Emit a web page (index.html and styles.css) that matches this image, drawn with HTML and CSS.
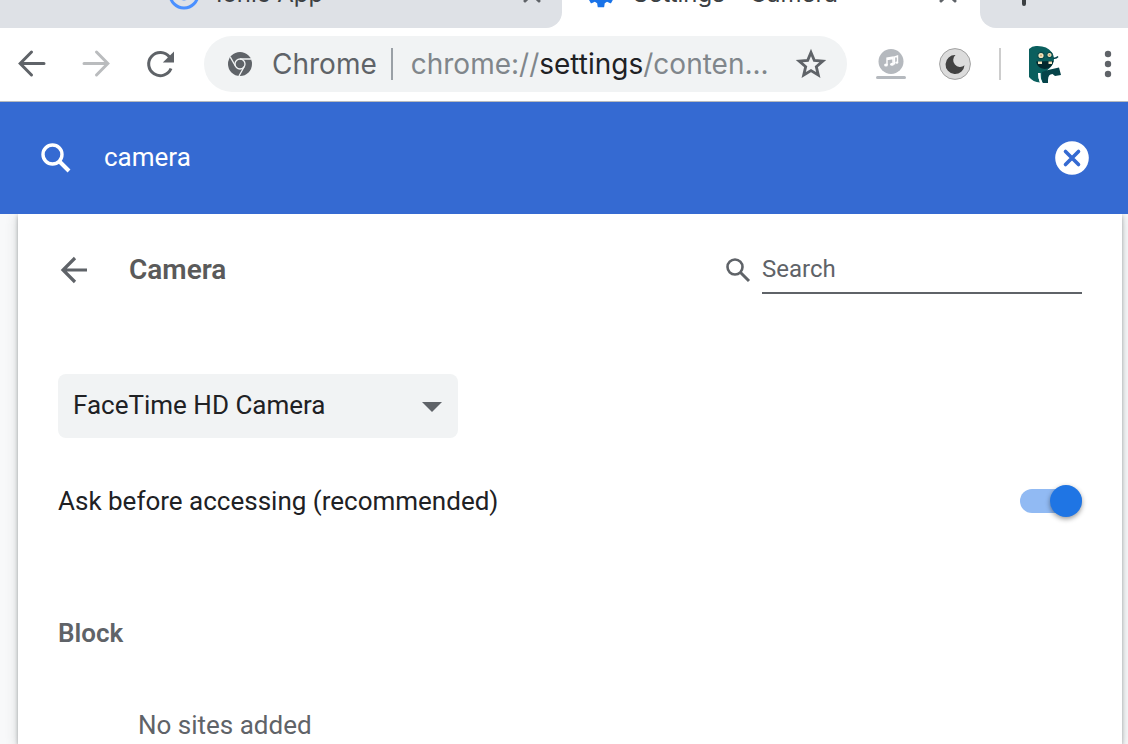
FILE: index.html
```html
<!DOCTYPE html>
<html lang="en">
<head>
<meta charset="utf-8">
<title>Settings - Camera</title>
<link rel="stylesheet" href="styles.css">
</head>
<body>
<div class="window">
  <div class="tabs">
    <div class="tab tab-first">
      <svg class="tab-icon" width="32" height="32" viewBox="0 0 32 32"><circle cx="16" cy="16" r="14" fill="none" stroke="#4a90ff" stroke-width="3"/><circle cx="16" cy="16" r="6.500" fill="#4a90ff"/></svg>
      <span class="tab-title">Ionic App</span>
      <button class="tab-close" aria-label="Close Ionic App"><svg width="20" height="20" viewBox="0 0 20 20"><path d="M3 3l14 14M17 3L3 17" stroke="#5f6368" stroke-width="3" stroke-linecap="round"/></svg></button>
    </div>
    <div class="tab tab-active">
      <svg class="tab-icon" width="32" height="32" viewBox="0 0 24 24"><path fill="#1a73e8" d="M19.4 13c0-.3.1-.6.1-1s0-.7-.1-1l2.100-1.600c.2-.2.2-.4.1-.6l-2-3.500c-.1-.2-.4-.3-.6-.2l-2.500 1c-.5-.4-1.100-.7-1.700-1l-.4-2.600c0-.2-.2-.5-.4-.5h-4c-.3 0-.5.2-.5.5l-.4 2.600c-.6.3-1.200.6-1.700 1l-2.500-1c-.2-.1-.5 0-.6.2l-2 3.500c-.1.2-.1.5.1.6L4.500 11c0 .3-.1.7-.1 1s0 .7.1 1l-2.100 1.600c-.2.200-.2.400-.1.600l2 3.500c.1.200.4.300.6.200l2.500-1c.5.4 1.100.7 1.700 1l.4 2.600c0 .3.2.5.5.5h4c.2 0 .4-.2.4-.5l.4-2.600c.6-.3 1.200-.6 1.700-1l2.500 1c.2.1.5 0 .6-.2l2-3.500c.1-.2.1-.4-.1-.6z"/></svg>
      <span class="tab-title">Settings - Camera</span>
      <button class="tab-close" aria-label="Close Settings"><svg width="20" height="20" viewBox="0 0 20 20"><path d="M3 3l14 14M17 3L3 17" stroke="#5f6368" stroke-width="3" stroke-linecap="round"/></svg></button>
    </div>
    <div class="tab tab-new">
      <button class="tab-close" aria-label="New tab"><svg width="28" height="28" viewBox="0 0 28 28"><path d="M14 2v24M2 14h24" stroke="#3c4043" stroke-width="4" stroke-linecap="round"/></svg></button>
    </div>
  </div>

  <div class="toolbar">
    <div class="nav">
      <button class="icon-button" aria-label="Back"><svg width="32" height="32" viewBox="0 0 32 32"><path d="M28 15.500H5M15.500 4L4.200 15.500L15.500 27" fill="none" stroke="#5f6368" stroke-width="3" stroke-linecap="round"/></svg></button>
      <button class="icon-button" aria-label="Forward"><svg width="32" height="32" viewBox="0 0 32 32"><path d="M4 15.500H27M16.500 4L27.800 15.500L16.500 27" fill="none" stroke="#babcbe" stroke-width="3" stroke-linecap="round"/></svg></button>
      <button class="icon-button" aria-label="Reload"><svg width="32" height="32" viewBox="0 0 32 32"><path d="M25.500 9A11.600 11.600 0 1 0 27 20.500" fill="none" stroke="#5f6368" stroke-width="3"/><path d="M30 3.500V14.500H18.800z" fill="#5f6368"/></svg></button>
    </div>
    <div class="omnibox">
      <svg class="site-icon" width="24" height="24" viewBox="0 0 24 24"><circle cx="12" cy="12" r="12" fill="#5f6368"/><g fill="none" stroke="#f1f3f4" stroke-width="1.300"><circle cx="12" cy="12" r="5"/><path d="M12 7h11M7.700 14.500L2.300 5.200M16.300 14.500L11 24"/></g></svg>
      <span class="site-name">Chrome</span>
      <span class="site-rule"></span>
      <div class="url" role="textbox" aria-label="Address" contenteditable="true" spellcheck="false">chrome://<span class="url-host">settings</span>/conten...</div>
      <button class="icon-button" aria-label="Bookmark this page"><svg width="32" height="32" viewBox="0 0 32 32"><path d="M16 4.500L19.300 12.400L27.800 13.100L21.300 18.700L23.300 27L16 22.600L8.700 27L10.700 18.700L4.200 13.100L12.700 12.400z" fill="none" stroke="#5f6368" stroke-width="2.800"/></svg></button>
    </div>
    <div class="extensions">
      <button class="icon-button" aria-label="Music"><svg width="32" height="32" viewBox="0 0 32 32"><circle cx="16" cy="13.500" r="12.500" fill="#b5b9be"/><rect x="1" y="28" width="30" height="3" rx="1.500" fill="#b5b9be"/><g fill="none" stroke="#fff" stroke-width="1.400"><path d="M12 17V10L18 9V16M12 11.500L18 10.500M19.500 16.500V9L22.500 8V14"/></g><g fill="#fff"><ellipse cx="11" cy="17" rx="1.900" ry="1.500"/><ellipse cx="17" cy="16.200" rx="1.900" ry="1.500"/><ellipse cx="21.800" cy="14.600" rx="1.500" ry="1.200"/></g></svg></button>
      <button class="icon-button" aria-label="Dark mode"><svg width="32" height="32" viewBox="0 0 32 32"><circle cx="16" cy="16" r="15.400" fill="#dcdcdc" stroke="#a0a0a0"/><path d="M16.500 7A9.500 9.500 0 1 0 25.500 17.200A6.200 6.200 0 1 1 16.500 7z" fill="#424242"/></svg></button>
    </div>
    <span class="toolbar-rule"></span>
    <button class="profile" aria-label="Profile"><svg width="36" height="40" viewBox="0 0 36 40"><path d="M1 5Q4 2 8 2Q19 1.500 23.500 8Q27 13 25.500 18Q24 23 20 25.500L18 28Q17 33 20 36V39H15Q12 35 12 29L10 29Q10 34 12 38.500Q5 38 1 33z" fill="#0a5f5e"/><path d="M20 26L31 23.500L33 31L27 32L24.500 30Q20 30 20 36V39H15Q13 34 14 28z" fill="#06444a"/><path d="M25 14Q28 15 30 12.500" fill="none" stroke="#06444a" stroke-width="1.500"/><circle cx="13" cy="11.500" r="3.200" fill="#f3e5bd" stroke="#08484a" stroke-width="1.200"/><circle cx="21.500" cy="11" r="2.700" fill="#f3e5bd" stroke="#08484a" stroke-width="1.200"/><circle cx="13" cy="11.500" r="1" fill="#c9a873"/><circle cx="21.500" cy="11" r="1" fill="#c9a873"/><path d="M8 17.500L25.500 17Q23.500 25 16.500 25Q9.500 24.500 8 17.500z" fill="#03282e"/><path d="M10 17.500h4v2.500H10zM20.500 17.500h3.500V20H20.500z" fill="#f3e5bd"/><path d="M11.500 29Q11 34 13 38.500" fill="none" stroke="#fff" stroke-width="2.200"/></svg></button>
    <button class="icon-button menu-button" aria-label="Menu"><svg width="32" height="32" viewBox="0 0 32 32"><g fill="#5f6368"><circle cx="16" cy="6" r="3.200"/><circle cx="16" cy="16" r="3.200"/><circle cx="16" cy="26" r="3.200"/></g></svg></button>
  </div>

  <header class="search-bar">
    <label class="search-label" for="settings-search"><svg width="32" height="32" viewBox="0 0 32 32"><circle cx="12.500" cy="12.500" r="9.500" fill="none" stroke="#fff" stroke-width="3.400"/><path d="M19.500 19.500L29 29" stroke="#fff" stroke-width="4"/></svg></label>
    <input class="search-input" id="settings-search" type="text" value="camera" aria-label="Search settings">
    <button class="clear-button" aria-label="Clear search"><svg width="34" height="34" viewBox="0 0 34 34"><circle cx="17" cy="17" r="16.800" fill="#fff"/><path d="M10.500 10.500l13 13M23.500 10.500l-13 13" stroke="#356ad2" stroke-width="3.600" stroke-linecap="round"/></svg></button>
  </header>

  <div class="page">
    <main class="card">
      <div class="card-head">
        <button class="icon-button" aria-label="Back to site settings"><svg width="32" height="32" viewBox="0 0 32 32"><path d="M29 16H5.500M17 4L5 16L17 28" fill="none" stroke="#5f6368" stroke-width="3.200"/></svg></button>
        <h1 class="card-title">Camera</h1>
        <label class="site-search-label" for="site-search"><svg width="26" height="26" viewBox="0 0 26 26"><circle cx="10" cy="10" r="7.500" fill="none" stroke="#5f6368" stroke-width="2.600"/><path d="M15.500 15.500L24 24" stroke="#5f6368" stroke-width="3"/></svg></label>
        <input class="site-search" id="site-search" type="text" placeholder="Search" aria-label="Search">
      </div>
      <div class="picker">
        <select class="picker-select" aria-label="Camera device"><option>FaceTime HD Camera</option></select>
        <svg class="picker-arrow" width="20" height="10" viewBox="0 0 20 10"><path d="M0 0h20L10 10z" fill="#5f6368"/></svg>
      </div>
      <div class="row">
        <label for="ask">Ask before accessing (recommended)</label>
        <input class="toggle" id="ask" type="checkbox" role="switch" checked>
      </div>
      <h2 class="section-title">Block</h2>
      <p class="empty">No sites added</p>
    </main>
  </div>
</div>
</body>
</html>
```

FILE: styles.css
```css
* {
  box-sizing: border-box;
}

body {
  margin: 0;
  background: #f8f9fa;
  color: #202124;
  font-family: Roboto, "Liberation Sans", sans-serif;
  font-size: 26px;
  line-height: 32px;
}

button {
  display: block;
  flex: none;
  padding: 0;
  border: 0;
  background: none;
}

input,
select {
  padding: 0;
  border: 0;
  border-radius: 0;
  outline: 0;
  font: inherit;
}

svg {
  display: block;
  flex: none;
}

.window {
  display: flex;
  flex-direction: column;
  height: 100vh;
  overflow: hidden;
}

.tabs {
  display: grid;
  flex: none;
  grid-template-columns: 562fr 418fr 148fr;
  height: 28px;
  overflow: hidden;
  background: #fff;
  font-family: Inter, "Liberation Sans", sans-serif;
  font-size: 24px;
  color: #3c4043;
}

.tab {
  display: flex;
  align-items: flex-end;
  height: 28px;
  min-width: 0;
  background: #dee1e6;
}

.tab-first {
  padding: 0 20px 18px 168px;
  border-bottom-right-radius: 16px;
}

.tab-active {
  padding: 0 22px 18px 23px;
  background: #fff;
}

.tab-new {
  padding: 0 0 22px 30px;
  border-bottom-left-radius: 16px;
}

.tab-title {
  flex: 1;
  margin-left: 16px;
  white-space: nowrap;
}

.tab-close {
  padding-bottom: 6px;
}

.tab-new .tab-close {
  padding-bottom: 0;
}

.toolbar {
  display: flex;
  flex: none;
  align-items: center;
  padding: 8px 4px 9px 16px;
  border-bottom: 1px solid #b8babd;
  background: #fff;
}

.nav,
.extensions {
  display: flex;
  flex: none;
  gap: 32px;
}

.omnibox {
  display: flex;
  flex: 1;
  align-items: center;
  height: 56px;
  min-width: 0;
  margin: 0 28px;
  padding: 0 20px 0 24px;
  border-radius: 28px;
  background: #f1f3f4;
  color: #5f6368;
  font-family: Inter, "Liberation Sans", sans-serif;
  font-size: 28px;
}

.site-name {
  margin-left: 20px;
}

.site-rule {
  flex: none;
  width: 2px;
  height: 32px;
  margin: 0 18px 0 14px;
  background: #9aa0a6;
}

.url {
  flex: 1;
  min-width: 0;
  overflow: hidden;
  outline: 0;
  color: #80868b;
  white-space: nowrap;
}

.url-host {
  color: #202124;
}

.toolbar-rule {
  flex: none;
  width: 2px;
  height: 32px;
  margin: 0 27px 0 28px;
  background: #cdcdcd;
}

.menu-button {
  margin-left: 28px;
}

.search-bar {
  display: flex;
  flex: none;
  align-items: center;
  height: 112px;
  padding: 0 39px 0 40px;
  background: #356ad2;
  color: #fff;
}

.search-input {
  flex: 1;
  min-width: 0;
  margin-left: 32px;
  padding-bottom: 2px;
  background: none;
  color: #fff;
}

.page {
  flex: 1;
  min-height: 0;
  padding: 0 6px 0 18px;
  overflow: hidden;
}

.card {
  min-height: 100%;
  padding: 32px 40px 0;
  background: #fff;
  box-shadow: 0 2px 4px rgba(60, 64, 67, 0.4), 0 2px 12px rgba(60, 64, 67, 0.2);
}

.card-head {
  display: flex;
  align-items: center;
  height: 48px;
}

.card-title {
  flex: 1;
  margin: 0 0 0 39px;
  color: #5a5a5a;
  font-size: 28px;
  font-weight: 600;
}

.site-search-label {
  margin-right: 11px;
}

.site-search {
  width: 320px;
  height: 48px;
  padding-bottom: 0;
  border-bottom: 2px solid #5f6368;
  font-size: 24px;
}

.site-search::placeholder {
  color: #5f6368;
  opacity: 1;
}

.picker {
  position: relative;
  width: 400px;
  margin-top: 80px;
}

.picker-select {
  width: 100%;
  height: 64px;
  padding: 0 48px 2px 15px;
  appearance: none;
  border-radius: 8px;
  background: #f1f3f4;
  color: #202124;
}

.picker-arrow {
  position: absolute;
  top: 28px;
  right: 16px;
  pointer-events: none;
}

.row {
  display: flex;
  align-items: center;
  justify-content: space-between;
  margin-top: 47px;
}

.toggle {
  position: relative;
  width: 62px;
  height: 24px;
  margin: 0;
  appearance: none;
  border-radius: 12px;
  background: #91baf3;
}

.toggle::before {
  content: "";
  position: absolute;
  top: -4px;
  right: 0;
  width: 32px;
  height: 32px;
  border-radius: 50%;
  background: #1f75e4;
  box-shadow: 0 2px 5px rgba(0, 0, 0, 0.4);
}

.section-title {
  margin: 100px 0 0;
  color: #5f6368;
  font-size: 26px;
  font-weight: 600;
}

.empty {
  margin: 60px 0 0 80px;
  color: #5f6368;
}
```
